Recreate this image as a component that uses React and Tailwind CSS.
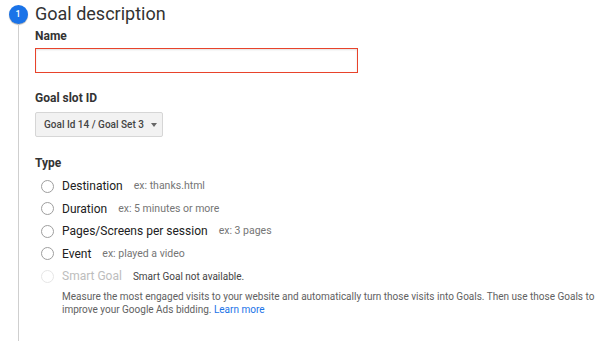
import { useState } from 'react';

const types = [
  { label: 'Destination', hint: 'ex: thanks.html' },
  { label: 'Duration', hint: 'ex: 5 minutes or more' },
  { label: 'Pages/Screens per session', hint: 'ex: 3 pages' },
  { label: 'Event', hint: 'ex: played a video' },
];

export default function App() {
  const [name, setName] = useState('');
  const [type, setType] = useState(null);

  return (
    <div className="flex h-[341px] w-[612px] bg-white font-['Roboto',sans-serif]">
      {/* step rail */}
      <div className="flex w-[35px] flex-col items-center pl-[1px]">
        <div className="mt-[5px] flex h-[19px] w-[19px] items-center justify-center rounded-full bg-[#1a73e8] text-[9px] font-medium text-white shadow-[0_1px_1px_rgba(0,0,0,0.3)]">
          1
        </div>
        <div className="w-px flex-1 bg-[#cfcfcf]" />
      </div>

      <div className="flex flex-1 flex-col">
        <h2 className="mt-[4px] h-[20px] text-[18px] leading-[20px] text-[#333]">Goal description</h2>

        <label className="mt-[4px] text-[12px] font-bold leading-[16px] text-[#333]">Name</label>
        <input
          value={name}
          onChange={(e) => setName(e.target.value)}
          className="mt-[4px] h-[25px] w-[323px] border border-[#e8432b] px-1 text-[12px] shadow-[inset_0_1px_2px_rgba(0,0,0,0.12)] outline-none"
        />

        <label className="mt-[17px] text-[12px] font-bold leading-[16px] text-[#333]">Goal slot ID</label>
        <button className="mt-[6px] flex h-[25px] w-[128px] items-center whitespace-nowrap rounded-[2px] border border-[#d6d6d6] bg-[#f2f2f2] pl-[8px] text-[10px] font-medium text-[#444]">
          Goal Id 14 / Goal Set 3
          <span className="ml-[7px] h-0 w-0 border-x-[3.5px] border-t-[4px] border-x-transparent border-t-[#666]" />
        </button>

        <label className="mt-[18px] text-[12px] font-bold leading-[16px] text-[#333]">Type</label>

        <div className="mt-[4px] flex flex-col">
          {types.map((t, i) => (
            <label key={t.label} className="flex h-[22.5px] cursor-pointer items-center" onClick={() => setType(i)}>
              <span className="ml-[6px] flex h-[13px] w-[13px] items-center justify-center rounded-full border border-[#9e9e9e]">
                {type === i && <span className="h-[7px] w-[7px] rounded-full bg-[#1a73e8]" />}
              </span>
              <span className="ml-[8px] text-[12px] text-[#212121]">{t.label}</span>
              <span className="ml-[11px] text-[10.5px] text-[#757575]">{t.hint}</span>
            </label>
          ))}
          <div className="flex h-[22.5px] items-center">
            <span className="ml-[6px] h-[13px] w-[13px] rounded-full border border-[#e6e6e6]" />
            <span className="ml-[8px] text-[12px] text-[#bdbdbd]">Smart Goal</span>
            <span className="ml-[11px] text-[10px] text-[#444]">Smart Goal not available.</span>
          </div>
        </div>

        <p className="ml-[27px] mt-[2px] w-[540px] text-[10px] leading-[13px] text-[#616161]">
          Measure the most engaged visits to your website and automatically turn those visits into Goals. Then use those Goals to improve your Google Ads bidding.{' '}
          <a href="#" className="text-[#1a73e8]">Learn more</a>
        </p>
      </div>
    </div>
  );
}
